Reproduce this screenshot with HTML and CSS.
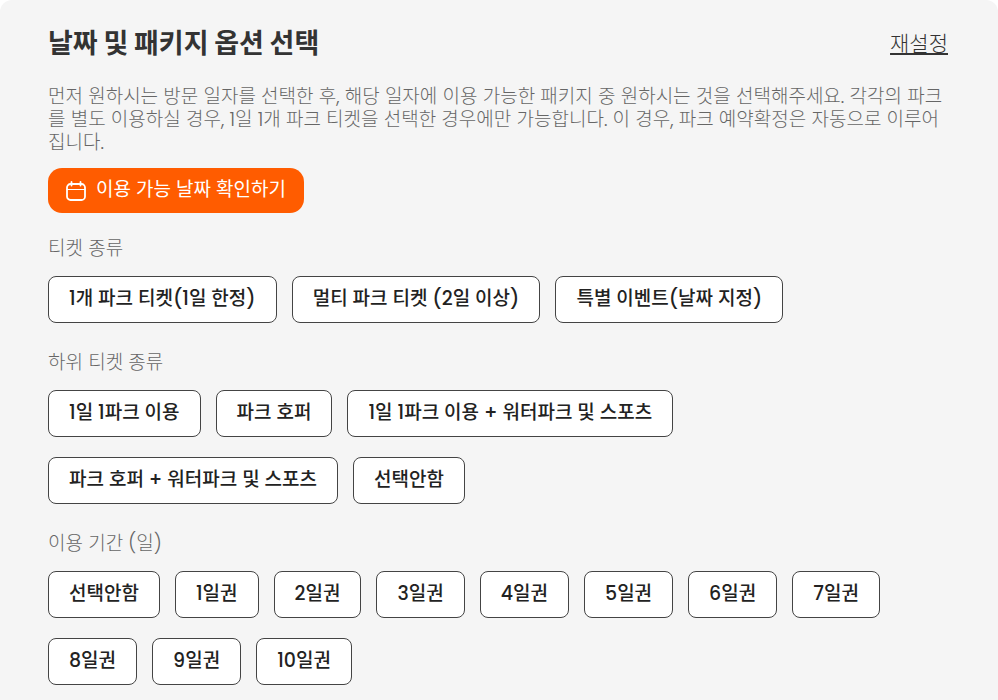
FILE: index.html
```html
<!DOCTYPE html>
<html lang="ko">
<head>
	<meta charset="utf-8">
	<title>날짜 및 패키지 옵션 선택</title>
	<link rel="stylesheet" href="styles.css">
</head>
<body>
	<main class="panel">
		<header class="panel-header">
			<h1>날짜 및 패키지 옵션 선택</h1>
			<a class="reset" href="#">재설정</a>
		</header>
		<p class="intro">먼저 원하시는 방문 일자를 선택한 후, 해당 일자에 이용 가능한 패키지 중 원하시는 것을 선택해주세요. 각각의 파크를 별도 이용하실 경우, 1일 1개 파크 티켓을 선택한 경우에만 가능합니다. 이 경우, 파크 예약확정은 자동으로 이루어집니다.</p>
		<button type="button" class="date-button">
			<svg class="calendar" viewBox="0 0 20 20" fill="none" stroke="currentColor" stroke-width="1.8" stroke-linecap="round" aria-hidden="true">
				<rect x="1" y="3" width="18" height="16" rx="3.5"/>
				<path d="M5.5 1v3.5M14.5 1v3.5"/>
				<path d="M1 8.5h18" stroke-width="1.2"/>
			</svg>
			<span>이용 가능 날짜 확인하기</span>
		</button>

		<section class="option-group" aria-labelledby="ticket-type">
			<h2 id="ticket-type">티켓 종류</h2>
			<div class="options">
				<button type="button">1개 파크 티켓(1일 한정)</button>
				<button type="button">멀티 파크 티켓 (2일 이상)</button>
				<button type="button">특별 이벤트(날짜 지정)</button>
			</div>
		</section>

		<section class="option-group" aria-labelledby="sub-type">
			<h2 id="sub-type">하위 티켓 종류</h2>
			<div class="options">
				<button type="button">1일 1파크 이용</button>
				<button type="button">파크 호퍼</button>
				<button type="button">1일 1파크 이용 + 워터파크 및 스포츠</button>
				<button type="button">파크 호퍼 + 워터파크 및 스포츠</button>
				<button type="button">선택안함</button>
			</div>
		</section>

		<section class="option-group" aria-labelledby="days">
			<h2 id="days">이용 기간 (일)</h2>
			<div class="options">
				<button type="button">선택안함</button>
				<button type="button">1일권</button>
				<button type="button">2일권</button>
				<button type="button">3일권</button>
				<button type="button">4일권</button>
				<button type="button">5일권</button>
				<button type="button">6일권</button>
				<button type="button">7일권</button>
				<button type="button">8일권</button>
				<button type="button">9일권</button>
				<button type="button">10일권</button>
			</div>
		</section>
	</main>
</body>
</html>
```
FILE: styles.css
```css
* {
	box-sizing: border-box;
}
body {
	margin: 0;
	background-color: #fff;
	font-family: Poppins, "Noto Sans CJK KR", sans-serif;
	color: #333;
}
.panel {
	min-height: 100vh;
	padding: 26px 50px 14px 48px;
	background-color: #f5f5f5;
	border-radius: 12px 12px 0 0;
}
.panel-header {
	display: flex;
	justify-content: space-between;
	align-items: center;
}
h1 {
	margin: 0;
	font-size: 27px;
	line-height: 36px;
	font-weight: 700;
}
.reset {
	font-size: 21px;
	line-height: 36px;
	color: #333;
	font-weight: 300;
}
.intro {
	margin: 23px 0 14px;
	font-size: 19px;
	line-height: 23px;
	font-weight: 300;
	color: #666;
}
button {
	font-family: inherit;
	cursor: pointer;
}
.date-button {
	display: flex;
	align-items: center;
	gap: 10px;
	height: 45px;
	padding: 0 18px;
	border: 0;
	border-radius: 14px;
	background-color: #ff5c00;
	color: #fff;
	font-size: 19px;
}
.date-button span {
	padding-bottom: 3px;
}
.calendar {
	width: 20px;
	height: 20px;
}
.option-group {
	margin-top: 27px;
}
.date-button + .option-group {
	margin-top: 23px;
}
.option-group h2 {
	margin: 0 0 14px;
	font-size: 19px;
	line-height: 26px;
	font-weight: 300;
	color: #666;
}
.options {
	display: flex;
	flex-wrap: wrap;
	gap: 20px 15px;
}
.options button {
	height: 47px;
	padding: 0 20px 3px;
	border: 1px solid #444;
	border-radius: 8px;
	background-color: #fff;
	color: #222;
	font-size: 19px;
	font-weight: 500;
}
```
